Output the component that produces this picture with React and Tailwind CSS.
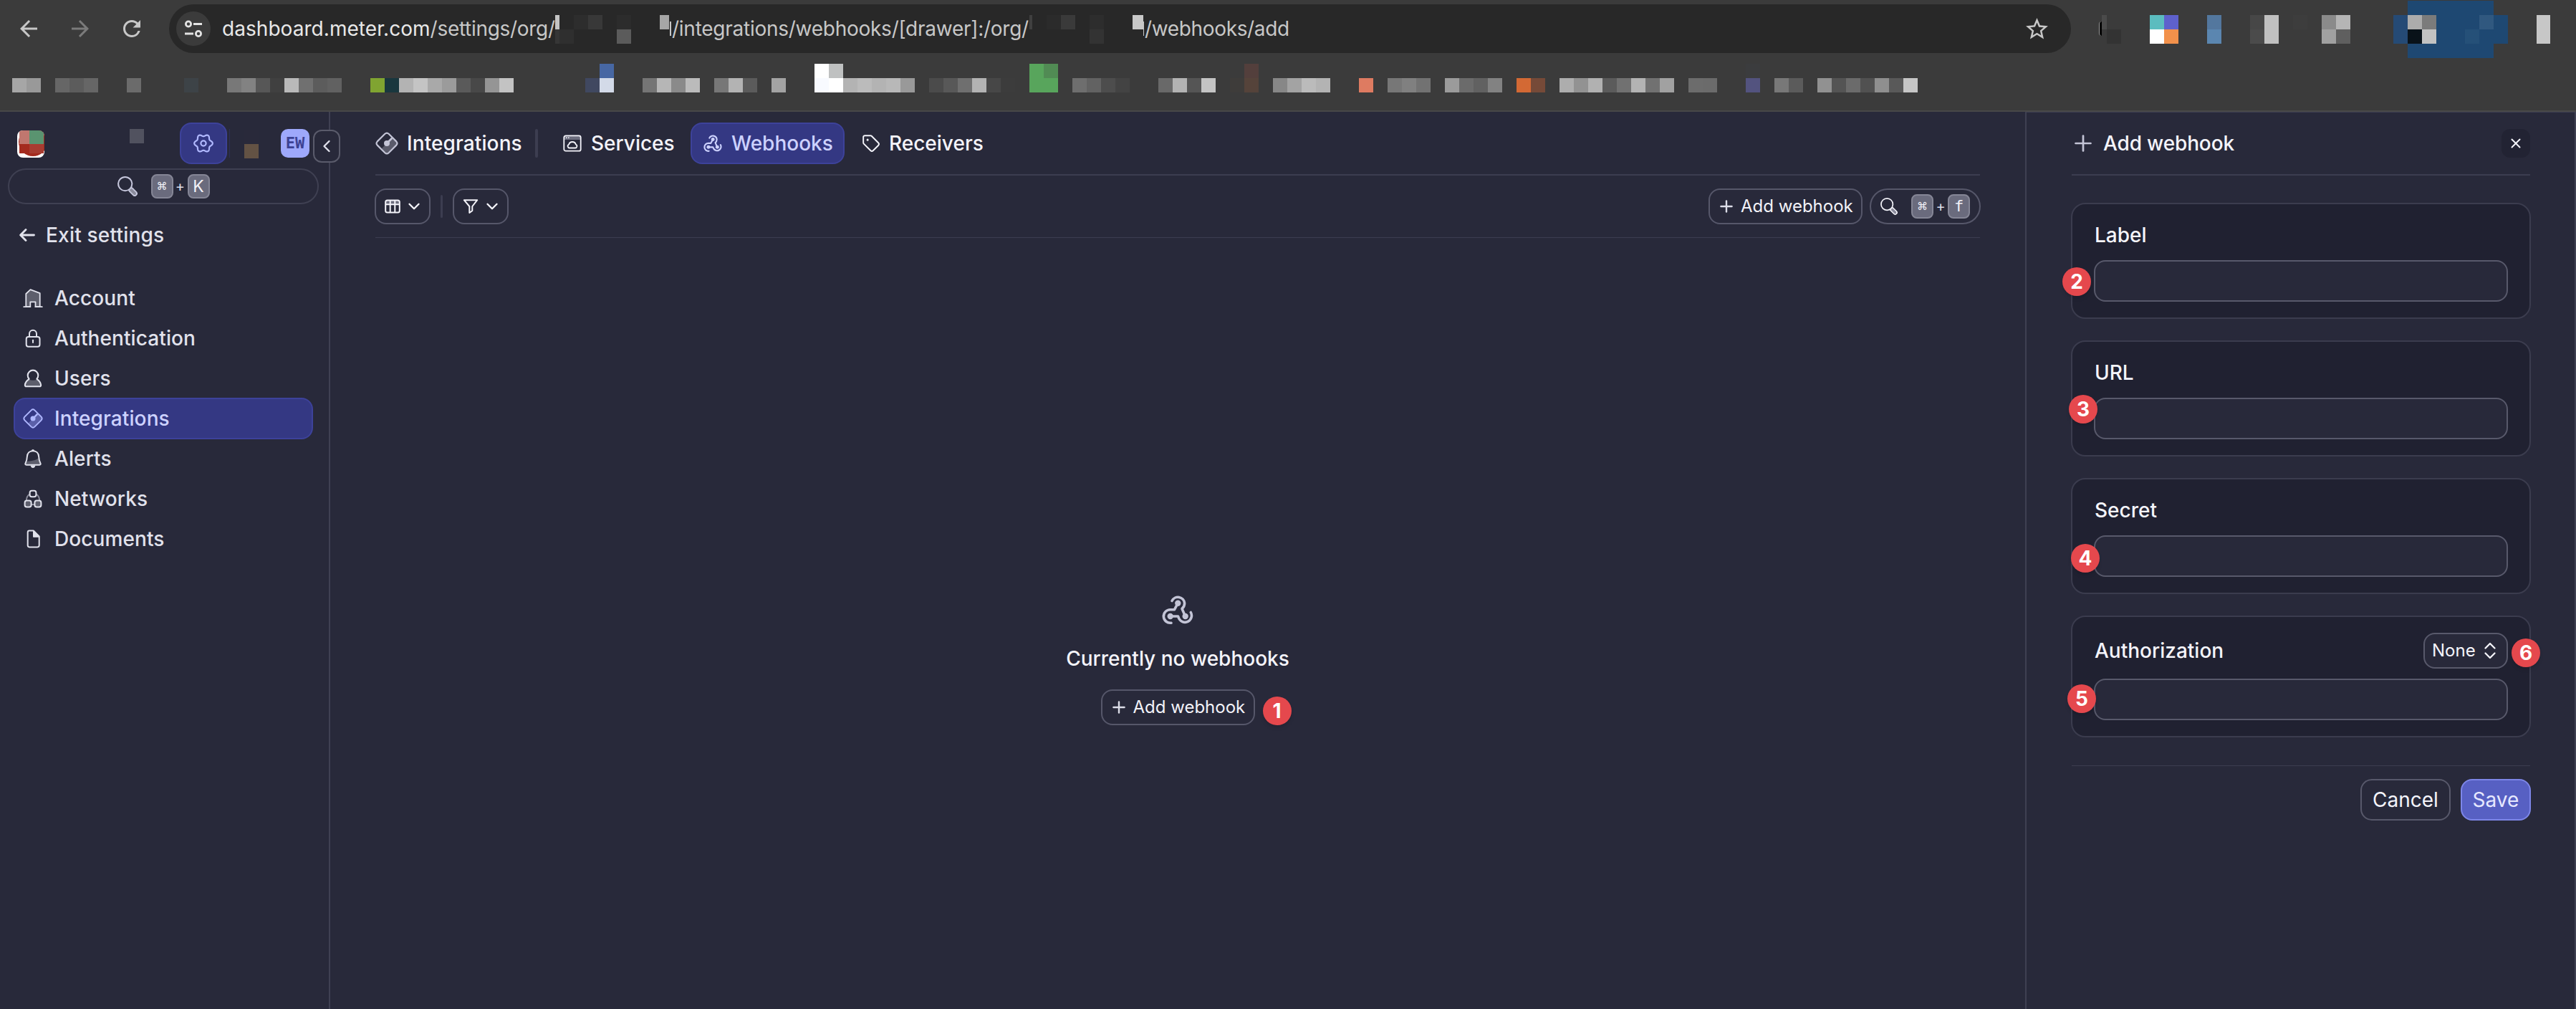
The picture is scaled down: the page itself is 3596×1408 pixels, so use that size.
import { ChevronDown, ChevronLeft, Plus, Tag, X } from "lucide-react";
import { MdArrowBack, MdArrowForward, MdRefresh, MdStarBorder } from "react-icons/md";

// Pixelated strips. "a6a6a6" = 20px cell, "a6a6a6:13" = 13px cell, "_40" = 40px gap
const BOOKMARKS = [
  "_820 4767a3 _280 ffffff bfc1c1 _260 58a55c 518b54 _260 533f3c _680 3b3c3e",
  "a6a6a6 999999 _20 666666 5c5c5c 666666 _40 6b6b6b _60 3d4347 _40 787878 828282 575757 404040 b9b9b9 707070 5c5c5c 616161 _40 80a431 19373e b3b3b3 c4c4c4 a9a9a9 9b9b9b 5a5a5a 484848 959595 c3c3c3 _100 404860 d3dae8 _40 757575 b6b6b6 8a8a8a bbbbbb _20 777777 b3b3b3 5b5b5b _20 a3a3a3 _40 f8faff ffffff b3b3b3 bbbbbb b3b3b3 b8b8b8 999999 _20 4b4b4b 585858 6f6f6f b3b3b3 474747 3c3c3c _20 58a55c 58a55c _20 6e6e6e 626262 4d4d4d 434343 _40 696969 b3b3b3 555555 c4c4c4 _20 3e3c3a 55433a _20 878787 a3a3a3 bbbbbb b3b3b3 _40 de7b61 _20 777777 808080 727272 _20 9b9b9b 6b6b6b 616161 828282 _20 d36934 764a38 _20 adadad 929292 b1b1b1 5b5b5b 717171 b3b3b3 717171 a1a1a1 _20 6c6c6c 6b6b6b _40 53537f _20 787878 5b5b5b _20 919191 545454 6b6b6b 515151 8f8f8f 595959 c6c6c6",
];

const EXTENSIONS = [
  "_427 1e4872:120",
  "4b4b4b:7 _60 5bbcbf 5e61cc _40 53779e _40 474747 c0c0c0 _20 3d3d3d _20 8a8a8a b5b5b5 _60 254a75 acacac 7b7b7b 1e4872:60 30587f 1e4872 _40 c7c7c7:19",
  "_7 333333 _40 ffffff f2914b _40 5b86b0 _40 4b4b4b c0c0c0 _60 a0a0a0 5f5f5f _60 254a75 091219 c2c2c2 1e4872:40 255078 1e4872:40 _40 c7c7c7:19",
  "_427 1e4872:120",
];

const ORG_ONE = ["c4c4c4:6 _20 2d2d2d 383838 _20 2c2c2c _40 a6a6a6:13", "363636:6 2f2f2f _60 5b5b5b"];
const ORG_TWO = ["404040:4 _20 2b2b2b 3a3a3a _20 2d2d2d _40 c8c8c8:15", "_84 333333"];

function Mosaic({ rows, className = "" }) {
  return (
    <div className={`flex flex-col shrink-0 ${className}`}>
      {rows.map((row, i) => (
        <div key={i} className="flex h-5">
          {row.split(" ").map((cell, j) => {
            if (cell[0] === "_") {
              return <span key={j} className="shrink-0" style={{ width: Number(cell.slice(1)) }} />;
            }
            const [color, width = 20] = cell.split(":");
            return (
              <span key={j} className="shrink-0" style={{ width: Number(width), backgroundColor: `#${color}` }} />
            );
          })}
        </div>
      ))}
    </div>
  );
}

/* ICONS */

function AccountIcon() {
  return (
    <svg width="28" height="28" viewBox="0 0 28 28" fill="none" stroke="currentColor" strokeWidth="1.8" strokeLinejoin="round" strokeLinecap="round">
      <path d="M4.3 26.2V8L10.5 2.2 23.7 7.2V26.2H17.5V19.3H10.3V26.2Z" fill="#5d5e6c" />
      <path d="M1.2 26.2H10.3M17.5 26.2H26.8" />
    </svg>
  );
}

function LockIcon() {
  return (
    <svg width="28" height="28" viewBox="0 0 28 28" fill="none" stroke="currentColor" strokeWidth="2">
      <rect x="4.7" y="12" width="18.8" height="13.8" rx="3" />
      <path d="M9 12V7.8a5 5 0 0 1 10 0V12" />
      <path d="M14 17.5v2.6" strokeLinecap="round" />
      <circle cx="14" cy="17" r="1.2" fill="currentColor" stroke="none" />
    </svg>
  );
}

function UserIcon() {
  return (
    <svg width="28" height="28" viewBox="0 0 28 28" fill="none" stroke="currentColor" strokeWidth="2.1" strokeLinejoin="round">
      <path d="M8 15.2C5 17.5 3.2 20 2.9 23q-.2 2.3 2 2.3H23.1q2.2 0 2-2.3C24.8 20 23 17.5 20 15.2q-6 3.2-12 0Z" fill="#5d5e6c" stroke="none" />
      <path d="M8.6 14.8a7.3 7.3 0 1 1 10.8 0C22.6 17 24.8 20 25.1 23q.2 2.3-2 2.3H4.9q-2.2 0-2-2.3C3.2 20 5.4 17 8.6 14.8Z" />
    </svg>
  );
}

function IntegrationsIcon({ size = 28, shade = "#5b60a9" }) {
  return (
    <svg width={size} height={size} viewBox="0 0 28 28" fill="none" stroke="currentColor" strokeWidth="1.9">
      <path d="M20.5 7.5 26 13q1 1 0 2L15 26q-1 1-2 0L7.5 20.5Z" fill={shade} stroke="none" />
      <path d="M11.7 2.4q2.3-2.1 4.6 0L25.6 11.7q2.1 2.3 0 4.6L16.3 25.6q-2.3 2.1-4.6 0L2.4 16.3q-2.1-2.3 0-4.6Z" />
      <path d="M14 14 20.3 7.7" strokeWidth="2.4" />
      <circle cx="14" cy="14" r="3.5" fill="currentColor" stroke="none" />
    </svg>
  );
}

function BellIcon() {
  return (
    <svg width="28" height="28" viewBox="0 0 28 28" fill="none" stroke="currentColor" strokeWidth="2" strokeLinejoin="round">
      <path d="M22.3 13C17 17 10 17.5 5 18L3.5 22.6H24.5Z" fill="#5d5e6c" stroke="none" />
      <path d="M14 3.2c-5 0-8 3.4-8.2 8.3-.2 4-.7 6-2 8.3-1 1.8-.6 2.9 1.2 2.9H23c1.8 0 2.2-1.1 1.2-2.9-1.3-2.3-1.8-4.3-2-8.3C22 6.6 19 3.2 14 3.2Z" />
      <path d="M10.5 23.5h7q-1 3.5-3.5 3.5t-3.5-3.5ZM11.5 3.5q.5-2.5 2.5-2.5t2.5 2.5Z" fill="currentColor" stroke="none" />
    </svg>
  );
}

function NetworksIcon() {
  return (
    <svg width="28" height="28" viewBox="0 0 28 28" fill="none" stroke="currentColor" strokeWidth="2">
      <path d="M9.5 7.5A10 10 0 0 0 5 16M18.5 7.5A10 10 0 0 1 23 16M11.5 22h5" stroke="#8a8b99" />
      <rect x="9.6" y="2.8" width="8.8" height="8.4" rx="2.8" />
      <rect x="2.6" y="16.6" width="9" height="9" rx="2.8" fill="#5d5e6c" />
      <rect x="16.4" y="16.6" width="9" height="9" rx="2.8" fill="#5d5e6c" />
    </svg>
  );
}

function DocumentIcon() {
  return (
    <svg width="28" height="28" viewBox="0 0 28 28" fill="none" stroke="currentColor" strokeWidth="2" strokeLinejoin="round">
      <path d="M9 2.6H15L22.7 10.5V23q0 2.4-2.4 2.4H9Q6.7 25.4 6.7 23V5Q6.7 2.6 9 2.6Z" />
      <path d="M14.5 2.6V11.3H22.7Z" fill="currentColor" strokeWidth="1" />
    </svg>
  );
}

// six-lobed gear outline
const GEAR_PATH =
  Array.from({ length: 120 }, (_, i) => {
    const t = (i / 120) * Math.PI * 2;
    const r = 11.3 + 1.5 * Math.cos(6 * t);
    return `${i ? "L" : "M"}${(14 + r * Math.cos(t)).toFixed(2)} ${(14 + r * Math.sin(t)).toFixed(2)}`;
  }).join("") + "Z";

function GearIcon() {
  return (
    <svg width="28" height="28" viewBox="0 0 28 28" fill="none" stroke="currentColor" strokeWidth="2.2" strokeLinejoin="round">
      <path d={GEAR_PATH} />
      <circle cx="14" cy="14" r="3.6" />
    </svg>
  );
}

function WebhookIcon({ size = 44 }) {
  return (
    <svg width={size} height={size} viewBox="0 0 44 44" fill="none" stroke="currentColor" strokeWidth="3.6" strokeLinecap="round" strokeLinejoin="round">
      <path d="M14 9.5A9.3 9.3 0 0 1 31.6 12.7Q31.6 17.5 28 20.5L32.7 31" />
      <path d="M13 40.2A9.3 9.3 0 1 1 11.7 21.7H17.5L22.3 12.7" />
      <path d="M40.3 25.5A9.3 9.3 0 1 1 24 34.5L22.5 31H11.7" />
      <g fill="currentColor" stroke="none">
        <circle cx="22.3" cy="12.7" r="4.2" />
        <circle cx="11.7" cy="31" r="4.2" />
        <circle cx="32.7" cy="31" r="4.2" />
      </g>
    </svg>
  );
}

function ServicesIcon() {
  return (
    <svg width="26" height="26" viewBox="0 0 26 26" fill="none" stroke="currentColor" strokeWidth="1.8">
      <path d="M1.5 2.5H24.5V8H1.5Z" fill="#6c6d7e" stroke="none" />
      <rect x="1.3" y="2.3" width="23.4" height="21.4" rx="2.5" />
      <path d="M9 19.5a2.6 2.6 0 0 1-.8-5q1-3.5 4.8-3.5t4.8 3.5a2.6 2.6 0 0 1-.8 5Z" />
      <path d="M4 5.3h1.6M7 5.3h1.6" strokeWidth="1.6" />
    </svg>
  );
}

function SearchIcon({ size = 28 }) {
  return (
    <svg width={size} height={size} viewBox="0 0 28 28" fill="none" stroke="currentColor" strokeLinecap="round">
      <path d="M19 19 24 24" strokeWidth="7.6" />
      <path d="M19 19 24 24" strokeWidth="4" stroke="#8a8b9b" />
      <circle cx="10.7" cy="10.6" r="9.6" strokeWidth="2" fill="#28293a" />
    </svg>
  );
}

function TableIcon() {
  return (
    <svg width="22" height="22" viewBox="0 0 22 22" fill="none" stroke="currentColor" strokeWidth="2">
      <path d="M1.5 2.5h19v5.5h-19Z" fill="#6c6d7e" stroke="none" />
      <rect x="1.2" y="2.5" width="19.6" height="17" rx="2.5" />
      <path d="M1.2 8.2H20.8M7.7 2.5V19.5M14.3 2.5V19.5" />
    </svg>
  );
}

function FilterIcon() {
  return (
    <svg width="22" height="22" viewBox="0 0 22 22" fill="none" stroke="currentColor" strokeWidth="2" strokeLinejoin="round">
      <path d="M1.8 2.2H20.2L13.3 11V17L9.3 20V11Z" />
    </svg>
  );
}

function SortIcon() {
  return (
    <svg width="18" height="24" viewBox="0 0 18 24" fill="none" stroke="currentColor" strokeWidth="2.3" strokeLinecap="round" strokeLinejoin="round">
      <path d="M2.5 8.5 9 2 15.5 8.5M2.5 15.5 9 22 15.5 15.5" />
    </svg>
  );
}

function ExitIcon() {
  return (
    <svg width="22" height="18" viewBox="0 0 22 18" fill="none" stroke="currentColor" strokeWidth="2.8" strokeLinecap="round" strokeLinejoin="round">
      <path d="M9 1.6 1.6 9 9 16.4M2 9H20.5" />
    </svg>
  );
}

/* SHARED PIECES */

function Kbd({ children }) {
  return (
    <span className="flex h-[34px] w-[31px] items-center justify-center rounded-lg border-2 border-[#858696] bg-[#6a6b7d] leading-none text-[#f2f2f8]">
      {children}
    </span>
  );
}

function Shortcut({ letter }) {
  return (
    <div className="flex items-center">
      <Kbd>
        <span className="font-['DejaVu_Sans'] text-[15px]">⌘</span>
      </Kbd>
      <span className="w-5 text-center text-xl leading-none text-[#dcdde8]">+</span>
      <Kbd>{letter}</Kbd>
    </div>
  );
}

function Marker({ n, className }) {
  return (
    <span
      className={`absolute flex size-10 items-center justify-center rounded-full bg-[#e5484d] text-[28px] font-bold leading-none text-white shadow-md ${className}`}
    >
      {n}
    </span>
  );
}

function AddWebhookButton() {
  return (
    <button className="flex h-[50px] w-[215px] items-center whitespace-nowrap rounded-2xl border-2 border-[#56576a] pl-2.5 text-[24px] font-normal text-[#f2f2f8]">
      <Plus size={26} strokeWidth={2.2} className="mr-[7px] shrink-0 text-[#dcdde8]" />
      Add webhook
    </button>
  );
}

/* BROWSER */

function BrowserBar() {
  return (
    <header className="h-[156px] border-b-2 border-[#484848] bg-[#3b3b3b] text-[#c7c7c7]">
      <div className="flex h-20 items-center">
        <MdArrowBack size={36} className="ml-[22px]" />
        <MdArrowForward size={36} className="ml-9 text-[#7b7b7b]" />
        <MdRefresh size={36} className="ml-9" />
        <div className="ml-[34px] flex h-[68px] w-[2655px] items-center rounded-full bg-[#282828] pl-2.5 text-[28px]">
          <span className="flex size-12 items-center justify-center rounded-full bg-[#3b3b3b]">
            <svg width="26" height="26" viewBox="0 0 26 26" fill="none" stroke="#e3e3e3" strokeWidth="2.8">
              <circle cx="6" cy="6.5" r="3.6" />
              <path d="M13 6.5H25M1 20H13" />
              <circle cx="20" cy="20" r="3.6" />
            </svg>
          </span>
          <span className="ml-4 w-[465px] shrink-0 whitespace-nowrap tracking-[-0.3px]">
            <span className="tracking-[0.05px] text-[#e8e8e8]">dashboard.meter.com</span>/settings/org/
          </span>
          <Mosaic rows={ORG_ONE} className="mt-0.5 w-[160px]" />
          <span className="h-5 w-0.5 shrink-0 bg-[#c7c7c7]" />
          <span className="ml-px w-[499px] shrink-0 whitespace-nowrap tracking-[-0.26px]">
            /integrations/webhooks/[drawer]:/org/
          </span>
          <Mosaic rows={ORG_TWO} className="mt-0.5 w-[159px]" />
          <span className="h-5 w-px shrink-0 bg-[#c7c7c7]" />
          <span className="ml-px whitespace-nowrap tracking-[-0.35px]">/webhooks/add</span>
          <MdStarBorder size={37} className="ml-auto mr-[29px]" />
        </div>
        <span className="ml-[39px] h-5 w-1 rounded-l-full border-l border-[#9a9a9a] bg-black" />
        <Mosaic rows={EXTENSIONS} className="mt-0.5" />
      </div>
      <Mosaic rows={BOOKMARKS} className="ml-[17px] pt-[9px]" />
    </header>
  );
}

/* SIDEBAR */

const menuItems = [
  { icon: AccountIcon, label: "Account" },
  { icon: LockIcon, label: "Authentication" },
  { icon: UserIcon, label: "Users" },
  { icon: IntegrationsIcon, label: "Integrations", active: true },
  { icon: BellIcon, label: "Alerts" },
  { icon: NetworksIcon, label: "Networks" },
  { icon: DocumentIcon, label: "Documents" },
];

function Sidebar() {
  return (
    <aside className="relative w-[461px] shrink-0 border-r-2 border-[#3f4052] text-[28px] font-medium tracking-[0.1px] text-[#e1e2ec]">
      <div className="mt-[15px] flex h-[58px] items-center pl-6">
        <div className="relative mt-0.5 size-[38px] overflow-hidden rounded-lg bg-white">
          <div className="absolute -top-1 left-0.5 size-10 rounded-full bg-[#a42b1f]" />
          <div className="absolute left-[3px] top-0 grid grid-cols-[14px_20px] grid-rows-[19px_13px]">
            <span className="bg-[#c0776f]" />
            <span className="bg-[#5a9470]" />
            <span className="bg-[#a42b1f]" />
            <span className="bg-[#a83c31]" />
          </div>
        </div>
        <span className="mb-5 ml-[119px] size-5 bg-[#51525f]" />
        <button className="ml-[50px] flex h-[58px] w-[66px] items-center justify-center rounded-2xl border-2 border-[#3d429a] bg-[#343883] text-[#b0b8ff]">
          <GearIcon />
        </button>
        <span className="ml-[3px] h-10 w-px bg-[#2c2f58]" />
        <Mosaic rows={["29293a", "635244"]} className="ml-5 mt-0.5" />
        <span className="ml-[31px] flex size-10 items-center justify-center rounded-[10px] bg-[#9ea8fb] font-['DejaVu_Sans_Mono'] text-[22px] font-bold leading-none tracking-normal text-[#3c4193]">
          EW
        </span>
      </div>
      <button className="absolute left-[437px] top-[25px] flex h-[46px] w-[38px] items-center justify-center rounded-xl border-2 border-[#5a5b6b] bg-[#28293a]">
        <ChevronLeft size={28} strokeWidth={2} />
      </button>

      <div className="ml-[11px] mt-1.5 flex h-[50px] w-[434px] items-center justify-center gap-[19px] rounded-full border-2 border-[#3f4052] font-normal">
        <span className="text-[#c6c7dc]">
          <SearchIcon />
        </span>
        <Shortcut letter={<span className="text-[23px]">K</span>} />
      </div>

      <a className="mt-[15px] flex h-14 items-center pl-[27px] tracking-[0.2px]">
        <ExitIcon />
        <span className="ml-[15px]">Exit settings</span>
      </a>

      <nav className="ml-[19px] mt-[31px] flex w-[418px] flex-col">
        {menuItems.map((item) => (
          <a
            key={item.label}
            className={`-mb-0.5 flex h-[58px] items-center gap-4 rounded-2xl border-2 pl-[11px] ${
              item.active ? "border-[#3d429a] bg-[#343883] text-[#cdd2ff]" : "border-transparent"
            }`}
          >
            <span className={item.active ? "text-[#b0b8ff]" : ""}>
              <item.icon />
            </span>
            {item.label}
          </a>
        ))}
      </nav>
    </aside>
  );
}

/* MAIN */

function Main() {
  return (
    <main className="flex-1 px-[63px] text-[28px] font-medium text-[#f4f4fa]">
      <div className="flex h-[89px] items-center border-b-2 border-[#3c3d50] pt-px">
        <span className="text-[#c3c4d6]">
          <IntegrationsIcon size={32} shade="#5a5b6b" />
        </span>
        <span className="ml-3 w-[179px] tracking-[0.1px]">Integrations</span>
        <span className="h-10 w-1 rounded-full bg-[#3c3d50]" />
        <div className="ml-[35px] flex items-center">
          <ServicesIcon />
          <span className="ml-[13px] w-[139px]">Services</span>
        </div>
        <div className="flex h-[58px] w-[215px] items-center rounded-2xl border-2 border-[#3d429a] bg-[#343883] pl-4 text-[#cdd2ff]">
          <WebhookIcon size={26} />
          <span className="ml-[13px]">Webhooks</span>
        </div>
        <div className="ml-6 flex items-center">
          <Tag size={26} strokeWidth={1.8} />
          <span className="ml-3">Receivers</span>
        </div>
      </div>

      <div className="flex h-[87px] items-center border-b border-[#3c3d50]">
        <button className="-ml-px flex h-[50px] w-[78px] items-center gap-1.5 rounded-2xl border-2 border-[#56576a] pl-3">
          <TableIcon />
          <ChevronDown size={26} strokeWidth={2.2} />
        </button>
        <span className="ml-3.5 h-8 w-[3px] rounded-full bg-[#3c3d50]" />
        <button className="ml-3.5 flex h-[50px] w-[78px] items-center gap-1.5 rounded-2xl border-2 border-[#56576a] pl-3">
          <FilterIcon />
          <ChevronDown size={26} strokeWidth={2.2} />
        </button>
        <div className="-mr-px ml-auto flex gap-2.5 font-normal">
          <AddWebhookButton />
          <div className="flex h-[50px] w-[155px] items-center gap-[19px] rounded-full border-2 border-[#56576a] pl-[13px]">
            <SearchIcon size={24} />
            <Shortcut letter={<span className="font-['DejaVu_Sans_Mono'] text-[22px]">f</span>} />
          </div>
        </div>
      </div>

      <div className="flex flex-col items-center pt-[497px]">
        <span className="text-[#c3c4d6]">
          <WebhookIcon />
        </span>
        <p className="mt-[29px] leading-[34px]">Currently no webhooks</p>
        <div className="relative mt-[26px]">
          <AddWebhookButton />
          <Marker n={1} className="left-[226px] top-2.5" />
        </div>
      </div>
    </main>
  );
}

/* DRAWER */

const fields = [
  { label: "Label", marker: 2, place: "-left-[14px] top-[88px]" },
  { label: "URL", marker: 3, place: "-left-[5px] top-[74px]" },
  { label: "Secret", marker: 4, place: "-left-[2px] top-[90px]" },
];

function Drawer() {
  return (
    <section className="w-[769px] shrink-0 border-x-2 border-t border-[#3f4052] pl-[63px] pr-[62px] text-[28px] font-medium text-[#f4f4fa]">
      <div className="flex h-[88px] items-center border-b-2 border-[#3c3d50]">
        <Plus size={36} strokeWidth={1.8} className="-ml-0.5 text-[#c3c4d6]" />
        <span className="ml-2.5 tracking-[-0.15px]">Add webhook</span>
        <button className="ml-auto flex size-10 items-center justify-center rounded-xl bg-[#222333]">
          <X size={22} strokeWidth={2.2} />
        </button>
      </div>

      <div className="-mx-px mt-[38px] flex flex-col gap-[30px]">
        {fields.map((field) => (
          <div
            key={field.label}
            className="relative h-[162px] rounded-[20px] border-2 border-[#3b3c4e] bg-[#202131] px-[30px] pt-[26px] leading-[34px]"
          >
            <label className="pl-px">{field.label}</label>
            <div className="mt-[18px] h-[58px] rounded-2xl border-2 border-[#58596b] bg-[#28293a]" />
            <Marker n={field.marker} className={field.place} />
          </div>
        ))}
        <div className="relative h-[170px] rounded-[20px] border-2 border-[#3b3c4e] bg-[#202131] px-[30px] pt-[22px]">
          <div className="flex h-[50px] items-center justify-between">
            <label className="pl-px">Authorization</label>
            <button className="flex h-[50px] w-[118px] items-center justify-between rounded-2xl border-2 border-[#58596b] bg-[#28293a] pl-2.5 pr-3.5 text-[24px] font-normal">
              None
              <SortIcon />
            </button>
          </div>
          <div className="mt-3.5 h-[58px] rounded-2xl border-2 border-[#58596b] bg-[#28293a]" />
          <Marker n={5} className="-left-[7px] top-[94px]" />
          <Marker n={6} className="left-[613px] top-[30px]" />
        </div>
      </div>

      <div className="mt-[39px] border-t border-[#3c3d50] pt-[18px]">
        <div className="-mr-px flex justify-end gap-3.5 font-normal">
          <button className="h-[58px] w-[126px] rounded-2xl border-2 border-[#58596b]">Cancel</button>
          <button className="h-[58px] w-[98px] rounded-2xl border-2 border-[#7d86e8] bg-[#5760c3] text-[#e6e8ff]">Save</button>
        </div>
      </div>
    </section>
  );
}

export default function App() {
  return (
    <div className="flex h-[1408px] w-[3596px] flex-col overflow-hidden bg-[#28293a] font-['Inter',sans-serif]">
      <BrowserBar />
      <div className="flex flex-1">
        <Sidebar />
        <Main />
        <Drawer />
      </div>
    </div>
  );
}
